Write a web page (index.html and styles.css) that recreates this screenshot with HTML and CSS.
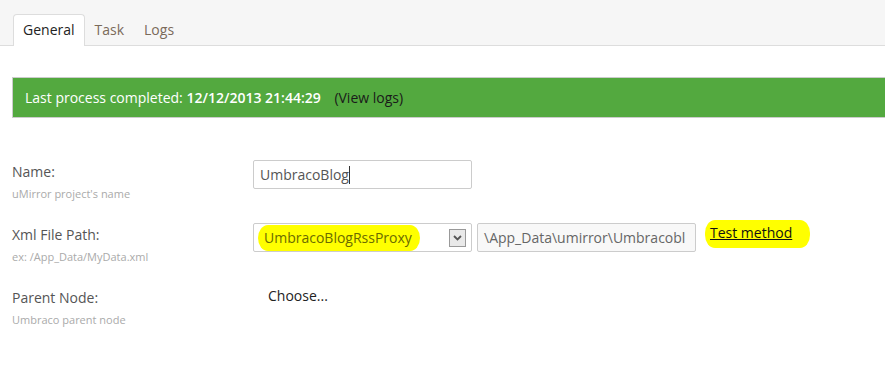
FILE: index.html
```html
<!DOCTYPE html>
<html lang="en">
<head>
    <meta charset="UTF-8">
    <title>uMirror - General</title>
    <link rel="stylesheet" href="styles.css">
</head>
<body>
    <!-- Tabs -->
    <div class="tab-bar">
        <ul class="tabs">
            <li class="tab active">General</li>
            <li class="tab">Task</li>
            <li class="tab">Logs</li>
        </ul>
    </div>

    <!-- Status -->
    <div class="status-bar">
        Last process completed: <strong>12/12/2013 21:44:29</strong>
        <a class="view-logs" href="#">(View logs)</a>
    </div>

    <!-- Form -->
    <div class="form">
        <div class="form-row">
            <div class="label-col">
                <div class="label">Name:</div>
                <div class="hint">uMirror project's name</div>
            </div>
            <div class="control-col">
                <div class="text-input">UmbracoBlog<span class="caret"></span></div>
            </div>
        </div>

        <div class="form-row">
            <div class="label-col">
                <div class="label">Xml File Path:</div>
                <div class="hint">ex: /App_Data/MyData.xml</div>
            </div>
            <div class="control-col">
                <div class="select">
                    <span class="marker marker-select">UmbracoBlogRssProxy</span>
                    <span class="select-arrow">
                        <svg width="9" height="6" viewBox="0 0 9 6"><path d="M1 1 L4.5 4.5 L8 1" fill="none" stroke="#555" stroke-width="1.8"/></svg>
                    </span>
                </div>
                <div class="text-input readonly">\App_Data\umirror\Umbracobl</div>
                <a class="test-link marker marker-link" href="#">Test method</a>
            </div>
        </div>

        <div class="form-row">
            <div class="label-col">
                <div class="label">Parent Node:</div>
                <div class="hint">Umbraco parent node</div>
            </div>
            <div class="control-col">
                <div class="choose">Choose...</div>
            </div>
        </div>
    </div>
</body>
</html>
```

FILE: styles.css
```css
/* General styles */
body {
    margin: 0;
    font-family: "Open Sans", "Noto Sans", sans-serif;
    font-size: 14px;
    color: #333;
    background: #fff;
}

/* Tabs */
.tab-bar {
    background: #f6f6f6;
    border-bottom: 1px solid #ddd;
    height: 45px;
    display: flex;
    align-items: flex-end;
    padding-left: 13px;
}

.tabs {
    display: flex;
    list-style: none;
    margin: 0 0 -1px 0;
    padding: 0;
}

.tab {
    padding: 6px 9px 7px;
    color: #7a6a5a;
    line-height: 18px;
    border: 1px solid transparent;
    border-bottom: none;
    border-radius: 4px 4px 0 0;
}

.tab.active {
    background: #fff;
    color: #222;
    border-color: #ddd;
    padding-bottom: 7px;
}

/* Status bar */
.status-bar {
    margin: 31px 0 0 12px;
    height: 39px;
    line-height: 39px;
    padding-left: 12px;
    background: #53a93f;
    border: 1px solid #cccccc;
    border-right: none;
    color: #fff;
    font-size: 14px;
}

.status-bar strong {
    font-weight: 600;
    margin-right: 10px;
}

.view-logs {
    color: #1a1a1a;
    text-decoration: none;
}

/* Form */
.form {
    padding: 42px 0 0 12px;
}

.form-row {
    display: flex;
    height: 63px;
}

.label-col {
    width: 241px;
    padding-top: 2px;
}

.label {
    color: #555;
    font-size: 14px;
    line-height: 20px;
}

.hint {
    color: #aaa;
    font-size: 11px;
    margin-top: 4px;
}

.control-col {
    display: flex;
    align-items: flex-start;
    gap: 5px;
}

.text-input {
    box-sizing: border-box;
    width: 219px;
    height: 29px;
    border: 1px solid #ccc;
    border-radius: 2px;
    padding: 0 6px;
    line-height: 27px;
    color: #555;
    font-size: 14px;
    white-space: nowrap;
    overflow: hidden;
}

.text-input.readonly {
    background: #f8f8f8;
    color: #666;
}

.caret {
    display: inline-block;
    width: 1px;
    height: 18px;
    background: #333;
    vertical-align: -4px;
}

.select {
    box-sizing: border-box;
    width: 219px;
    height: 29px;
    border: 1px solid #ccc;
    border-radius: 2px;
    display: flex;
    align-items: center;
    justify-content: space-between;
    padding: 0 5px 0 4px;
}

.marker {
    background: #ffff00;
    border-radius: 10px / 13px;
}

.marker-select {
    color: #6b6b00;
    padding: 3px 8px 3px 6px;
    line-height: 20px;
}

.select-arrow {
    box-sizing: border-box;
    width: 17px;
    height: 18px;
    background: #e9e9e9;
    border: 1px solid #999;
    display: flex;
    align-items: center;
    justify-content: center;
}

.test-link {
    margin: -3px 0 0 4px;
    padding: 3px 18px 5px 5px;
    color: #111;
    line-height: 20px;
}

.choose {
    color: #222;
    padding-left: 15px;
    margin-top: 0;
}
```
